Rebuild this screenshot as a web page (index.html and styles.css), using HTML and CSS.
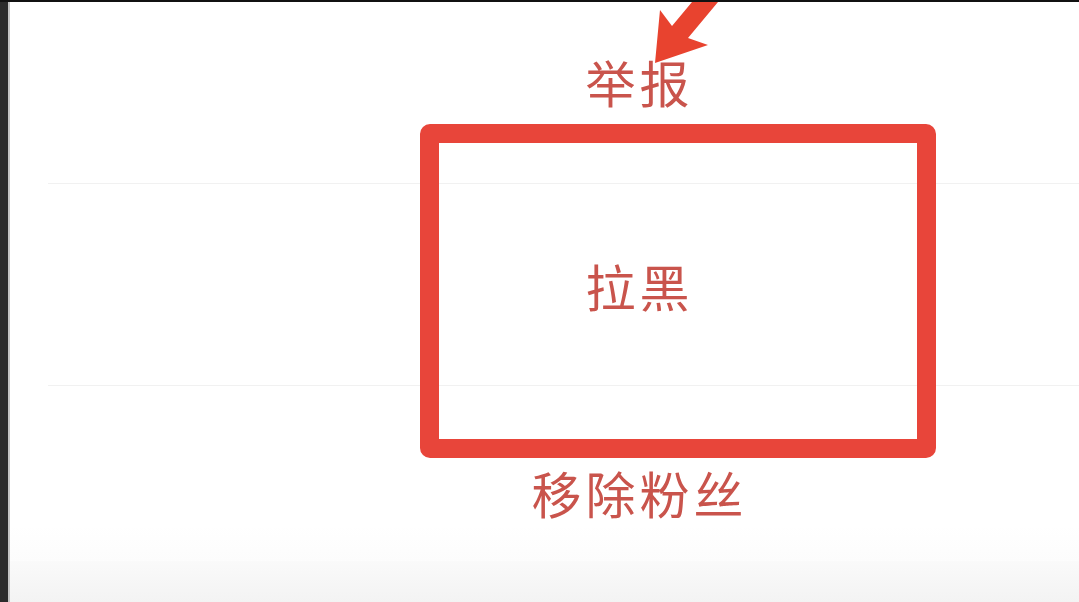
FILE: index.html
```html
<!DOCTYPE html>
<html lang="zh-CN">
<head>
<meta charset="utf-8">
<title>菜单</title>
<link rel="stylesheet" href="styles.css">
</head>
<body>
<div class="frame">
  <div class="edge"></div>
  <div class="screen">
    <div class="menu">
      <div class="item item-first"><span class="label">举报</span></div>
      <div class="sep"></div>
      <div class="item item-mid"><span class="label">拉黑</span></div>
      <div class="sep"></div>
      <div class="item item-last"><span class="label">移除粉丝</span></div>
      <div class="footer"></div>
    </div>
    <div class="highlight"></div>
    <svg class="arrow" width="110" height="70" viewBox="0 0 110 70" aria-hidden="true">
      <polygon points="78,0 104,0 74,36 94,43 41,61 46,8 58,24" fill="#e8432f"/>
    </svg>
  </div>
</div>
</body>
</html>
```

FILE: styles.css
```css
html, body {
  margin: 0;
  padding: 0;
  background: #ffffff;
}

.frame {
  display: flex;
  width: 1079px;
  height: 602px;
  overflow: hidden;
  border-top: 2px solid #111111;
  box-sizing: border-box;
}

.edge {
  width: 8px;
  flex: none;
  background: #2b2b2b;
  border-right: 2px solid #c4c4c4;
}

.screen {
  position: relative;
  flex: 1;
  background: #ffffff;
}

.menu {
  display: flex;
  flex-direction: column;
  height: 100%;
}

.item {
  display: flex;
  align-items: center;
  justify-content: center;
  box-sizing: border-box;
  flex: none;
  padding-left: 190px;
}

.label {
  font-family: "Noto Sans CJK SC", "Noto Sans", sans-serif;
  font-size: 50px;
  font-weight: 400;
  line-height: 1;
  color: #c9544c;
  letter-spacing: 4px;
}

.item-first {
  height: 181px;
  padding-bottom: 24px;
}

.item-mid {
  height: 201px;
  padding-top: 1px;
}

.item-last {
  height: 175px;
  padding-top: 37px;
  background: linear-gradient(to bottom, #ffffff 0%, #ffffff 80%, #fcfcfc 100%);
}

.sep {
  height: 1px;
  margin-left: 38px;
  background: #f1f1f1;
  flex: none;
}

.footer {
  flex: 1;
  background: linear-gradient(to bottom, #fafafa 0%, #f3f3f3 100%);
}

.highlight {
  position: absolute;
  left: 410px;
  top: 122px;
  width: 516px;
  height: 334px;
  box-sizing: border-box;
  border: 19px solid #e8453a;
  border-radius: 10px;
}

.arrow {
  position: absolute;
  left: 604px;
  top: 0;
}
```
